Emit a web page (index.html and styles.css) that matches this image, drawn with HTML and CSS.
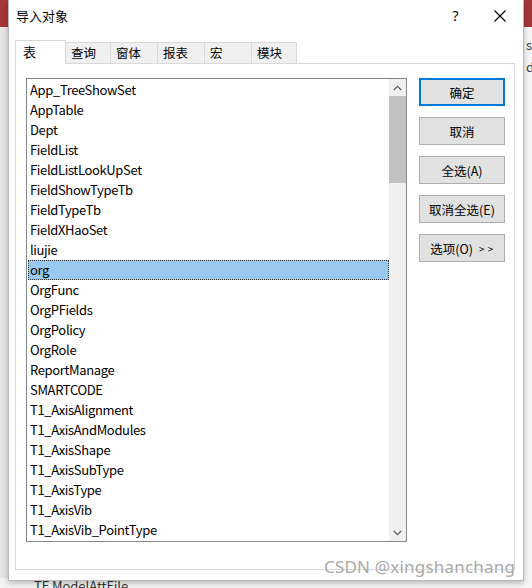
FILE: index.html
```html
<!DOCTYPE html>
<html>
<head>
<meta charset="utf-8">
<link rel="stylesheet" href="styles.css">
</head>
<body>
<div class="desktop">
  <div class="app-top"></div>
  <div class="app-bottom"><span class="bottom-text">TF ModelAttFile</span></div>
  <div class="app-right"><span class="rt1">ss</span><span class="rt2">d</span></div>

  <div class="dialog">
    <div class="titlebar">
      <div class="title">导入对象</div>
      <div class="tb-btn help">?</div>
      <div class="tb-btn close">
        <svg width="12" height="12" viewBox="0 0 12 12"><path d="M0.5 0.5 L11.5 11.5 M11.5 0.5 L0.5 11.5" stroke="#000" stroke-width="1.1" fill="none"/></svg>
      </div>
    </div>

    <div class="tabs">
      <div class="tab active">表</div>
      <div class="tab">查询</div>
      <div class="tab">窗体</div>
      <div class="tab">报表</div>
      <div class="tab">宏</div>
      <div class="tab">模块</div>
    </div>

    <div class="panel">
      <div class="listbox">
        <div class="items">
          <div class="item">App_TreeShowSet</div>
          <div class="item">AppTable</div>
          <div class="item">Dept</div>
          <div class="item">FieldList</div>
          <div class="item">FieldListLookUpSet</div>
          <div class="item">FieldShowTypeTb</div>
          <div class="item">FieldTypeTb</div>
          <div class="item">FieldXHaoSet</div>
          <div class="item">liujie</div>
          <div class="item selected">org</div>
          <div class="item">OrgFunc</div>
          <div class="item">OrgPFields</div>
          <div class="item">OrgPolicy</div>
          <div class="item">OrgRole</div>
          <div class="item">ReportManage</div>
          <div class="item">SMARTCODE</div>
          <div class="item">T1_AxisAlignment</div>
          <div class="item">T1_AxisAndModules</div>
          <div class="item">T1_AxisShape</div>
          <div class="item">T1_AxisSubType</div>
          <div class="item">T1_AxisType</div>
          <div class="item">T1_AxisVib</div>
          <div class="item">T1_AxisVib_PointType</div>
        </div>
        <div class="scrollbar">
          <div class="arrow">
            <svg width="9" height="6" viewBox="0 0 9 6"><path d="M0.8 5 L4.5 1.3 L8.2 5" stroke="#606060" stroke-width="1.3" fill="none"/></svg>
          </div>
          <div class="track"><div class="thumb"></div></div>
          <div class="arrow">
            <svg width="9" height="6" viewBox="0 0 9 6"><path d="M0.8 1 L4.5 4.7 L8.2 1" stroke="#606060" stroke-width="1.3" fill="none"/></svg>
          </div>
        </div>
      </div>
      <div class="buttons">
        <div class="btn default">确定</div>
        <div class="btn">取消</div>
        <div class="btn">全选(A)</div>
        <div class="btn">取消全选(E)</div>
        <div class="btn">选项(O)<span class="gt">&gt; &gt;</span></div>
      </div>
    </div>
  </div>

  <div class="watermark">CSDN @xingshanchang</div>
</div>
</body>
</html>
```

FILE: styles.css
```css
* { box-sizing: border-box; }
html, body {
  margin: 0;
  padding: 0;
}
body {
  width: 532px;
  height: 588px;
  overflow: hidden;
  font-family: "Noto Sans CJK SC", "Noto Sans", sans-serif;
  font-size: 13px;
  color: #000;
}
.desktop {
  position: relative;
  width: 532px;
  height: 588px;
  background: #e6e6e6;
  overflow: hidden;
}
.app-top {
  height: 27px;
  background: #a4373a;
}
.app-bottom {
  position: absolute;
  left: 0;
  top: 578px;
  width: 532px;
  height: 10px;
  background: #f3f3f3;
}
.bottom-text {
  position: absolute;
  left: 34px;
  top: -2px;
  font-size: 13px;
  color: #333;
}
.app-right {
  position: absolute;
  left: 524px;
  top: 27px;
  width: 8px;
  height: 560px;
  background: #f7f7f7;
}
.rt1 { position: absolute; left: 2px; top: 8px; font-size: 13px; color: #444; }
.rt2 { position: absolute; left: 2px; top: 30px; font-size: 13px; color: #444; }

.dialog {
  position: absolute;
  left: 8px;
  top: 0;
  width: 516px;
  height: 581px;
  background: #fff;
  border: 1px solid #b9b9b9;
  border-top: none;
  box-shadow: 0 2px 6px rgba(0,0,0,0.25);
}
.titlebar {
  height: 31px;
  display: flex;
  align-items: center;
}
.title {
  flex: 1;
  padding-left: 7px;
  font-size: 13px;
  line-height: 1;
}
.tb-btn {
  width: 46px;
  height: 31px;
  display: flex;
  align-items: center;
  justify-content: center;
  font-family: "Noto Sans", sans-serif;
  font-size: 14px;
}
.help { padding-left: 3px; }
.tabs {
  display: flex;
  align-items: flex-end;
  height: 32px;
  padding-left: 6px;
}
.tab {
  height: 21px;
  width: 46px;
  margin-left: -1px;
  padding-left: 5px;
  border: 1px solid #d9d9d9;
  border-bottom: none;
  background: #f0f0f0;
  font-size: 12.5px;
  line-height: 20px;
}
.tab.active {
  position: relative;
  z-index: 2;
  width: 51px;
  height: 24px;
  margin-left: 0;
  margin-bottom: -1px;
  padding-left: 7px;
  background: #fff;
  line-height: 22px;
  font-size: 13px;
}
.tab:nth-child(2) { width: 46px; }
.tab:nth-child(3) { width: 48px; }
.tab:nth-child(4) { width: 48px; }
.tab:nth-child(5) { width: 48px; }
.tab:nth-child(6) { width: 46px; }

.panel {
  margin-left: 6px;
  width: 500px;
  height: 507px;
  border: 1px solid #d9d9d9;
  display: flex;
  padding: 14px 8px 0 10px;
  gap: 12px;
}
.listbox {
  width: 381px;
  height: 464px;
  border: 1px solid #828790;
  display: flex;
}
.items {
  flex: 1;
  padding-top: 1px;
  padding-left: 1px;
}
.item {
  height: 20px;
  line-height: 20px;
  padding-left: 2px;
  font-size: 13px;
  letter-spacing: -0.35px;
  white-space: nowrap;
}
.item.selected {
  background: #99c9ef;
  outline: 1px dotted #333;
  outline-offset: -1px;
}
.scrollbar {
  width: 17px;
  background: #f0f0f0;
  display: flex;
  flex-direction: column;
}
.arrow {
  height: 17px;
  display: flex;
  align-items: center;
  justify-content: center;
}
.track {
  flex: 1;
}
.thumb {
  height: 87px;
  background: #c1c1c1;
}
.buttons {
  display: flex;
  flex-direction: column;
  gap: 11px;
}
.btn {
  width: 86px;
  height: 28px;
  background: #e1e1e1;
  border: 1px solid #adadad;
  display: flex;
  align-items: center;
  justify-content: center;
  font-size: 12.5px;
}
.btn.default {
  border: 2px solid #0078d7;
}
.gt {
  margin-left: 6px;
  font-size: 10px;
  letter-spacing: 0.5px;
}
.watermark {
  position: absolute;
  left: 324px;
  top: 555px;
  font-family: "Noto Sans", sans-serif;
  font-size: 17px;
  color: #a8a8a8;
  letter-spacing: 0.2px;
  text-shadow: 0 0 1px #fff;
}
```
